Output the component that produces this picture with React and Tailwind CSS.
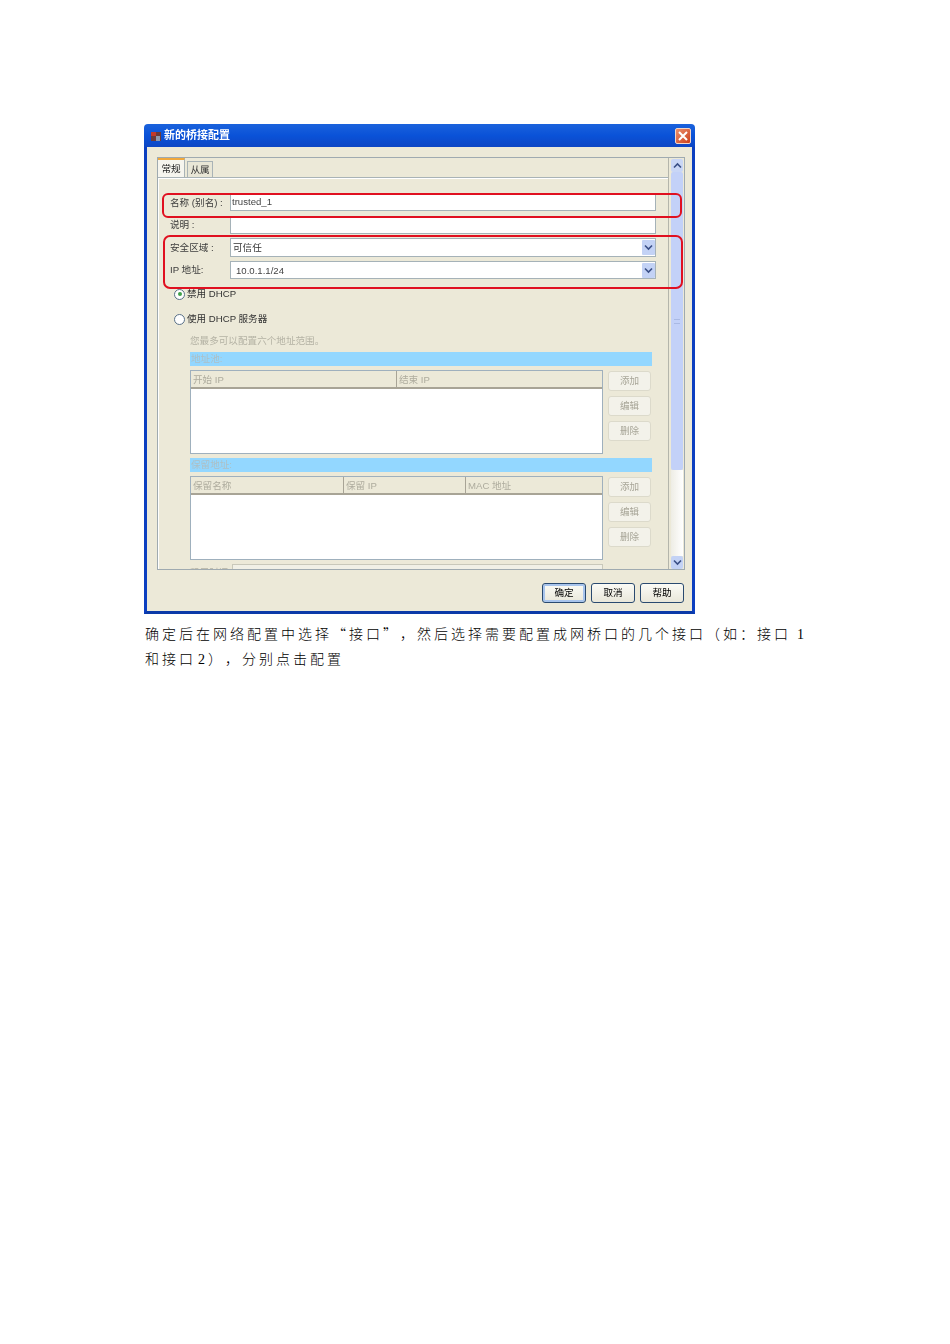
import React from 'react';

const uiFont = "font-['Liberation_Sans','Noto_Sans_CJK_SC',sans-serif]";

function Chevron({ up }) {
    return (
        <svg width="9" height="7" viewBox="0 0 9 7" fill="none" stroke="#3a4f86" strokeWidth="1.6">
            <path d={up ? 'M1 5.5 L4.5 2 L8 5.5' : 'M1 1.5 L4.5 5 L8 1.5'} />
        </svg>
    );
}

function Field({ label, value, select, className, textClass }) {
    return (
        <div className={`flex items-center shrink-0 ${className}`}>
            <span className="w-[71px] pl-[11px] whitespace-nowrap text-[#3c3c3c]">{label}</span>
            <div className="w-[426px] h-full flex items-center justify-between bg-white border border-[#a5b2b8]">
                <span className={textClass}>{value}</span>
                {select && (
                    <span className="w-[13px] h-[15px] flex items-center justify-center rounded-[1px] bg-[#c3d2f5]">
                        <Chevron />
                    </span>
                )}
            </div>
        </div>
    );
}

function Radio({ checked, label, className }) {
    return (
        <div className={`flex items-center shrink-0 pl-[15px] h-[16px] text-[#333] ${className}`}>
            <span className="w-[11px] h-[11px] rounded-full bg-white border border-[#5a7188] flex items-center justify-center">
                {checked && <span className="w-[4px] h-[4px] rounded-full bg-[#3fa04a]" />}
            </span>
            <span className="ml-[2px] whitespace-nowrap">{label}</span>
        </div>
    );
}

function SideButtons() {
    return (
        <div className="flex flex-col gap-[5px] ml-[5px] mt-[1px]">
            {['添加', '编辑', '删除'].map((t) => (
                <div
                    key={t}
                    className="w-[43px] h-[20px] flex items-center justify-center bg-[#f3f2ea] border border-[#dcdacb] rounded-[3px] text-[#a8a698]"
                >
                    {t}
                </div>
            ))}
        </div>
    );
}

function GridTable({ columns }) {
    return (
        <div className="flex flex-col w-[413px] h-[84px] border border-[#9fb0bd] bg-white">
            <div className="flex h-[18px] bg-[#ece9d8] border-b-2 border-[#a8a496] shrink-0">
                {columns.map((c, i) => (
                    <div
                        key={c.name}
                        style={{ width: c.width }}
                        className={`pl-[2px] pt-[1px] flex items-center text-[#aeac9e] ${i < columns.length - 1 ? 'border-r border-[#a8a496]' : ''}`}
                    >
                        {c.name}
                    </div>
                ))}
            </div>
        </div>
    );
}

function Section({ title, columns }) {
    return (
        <div className="pl-[31px] shrink-0 mt-[4px]">
            <div className="w-[462px] h-[14px] flex items-center bg-[#93d7ff] pl-[1px] text-[#aebfc4]">{title}</div>
            <div className="flex mt-[4px]">
                <GridTable columns={columns} />
                <SideButtons />
            </div>
        </div>
    );
}

function FooterButton({ label, primary }) {
    return (
        <div
            className={`w-[44px] h-[20px] flex items-center justify-center rounded-[3px] border border-[#2a4a70] bg-gradient-to-b from-[#fbfbf6] to-[#e9e7da] text-black ${primary ? 'shadow-[inset_0_0_0_2px_#a8c4ec]' : ''}`}
        >
            {label}
        </div>
    );
}

export default function App() {
    return (
        <div className="min-h-[1344px] bg-white pt-[124px] pl-[144px]">
            <div className={`relative w-[551px] h-[490px] flex flex-col blur-[0.5px] text-[9.6px] leading-none ${uiFont}`}>
                <div className="h-[23px] flex items-center shrink-0 rounded-t-[4px] pl-[6px] pr-[4px] bg-gradient-to-b from-[#1a62dc] via-[#0a52d8] to-[#0d46c4]">
                    <svg width="12" height="12" viewBox="0 0 12 12">
                        <rect x="1" y="2" width="10" height="9" fill="#6b3a3a" />
                        <rect x="1" y="2" width="5" height="4" fill="#c23a2a" />
                        <rect x="6" y="6" width="4" height="5" fill="#8c9ab0" />
                    </svg>
                    <span className="ml-[2px] text-[11px] font-bold text-white">新的桥接配置</span>
                    <div className="ml-auto w-[16px] h-[16px] flex items-center justify-center rounded-[2px] border border-[#f3d6c8] bg-gradient-to-br from-[#ea8f6c] to-[#cc3c14]">
                        <svg width="10" height="10" viewBox="0 0 10 10" stroke="#fff" strokeWidth="2">
                            <path d="M1 1 L9 9 M9 1 L1 9" />
                        </svg>
                    </div>
                </div>

                <div className="flex-1 flex flex-col bg-[#ece9d8] border-x-[3px] border-b-[3px] border-[#0c3fc0] border-b-[#0b3aa8] pl-[10px] pr-[8px] pt-[10px]">
                    <div className="h-[413px] w-[528px] shrink-0 flex border border-[#9faab0]">
                        <div className="w-[511px] h-full flex flex-col overflow-hidden border-r border-[#b4b5ab]">
                            <div className="h-[20px] shrink-0 flex items-end border-b border-[#a9b3b6]">
                                <div className="w-[27px] h-[19px] flex items-center justify-center bg-[#f6f5ee] border-t-2 border-[#f0a83c] border-r border-r-[#a9b3b6] text-[#222]">
                                    常规
                                </div>
                                <div className="w-[26px] h-[16px] ml-[2px] flex items-center justify-center border border-b-0 border-[#a9b3b6] bg-[#e8e6d6] text-[#333]">
                                    从属
                                </div>
                            </div>

                            <div className="flex-1 flex flex-col border-t border-l border-white overflow-hidden">
                                <Field label="名称 (别名) :" value="trusted_1" className="h-[17px] mt-[15px]" textClass="pl-[1px] pb-[1px] text-[#444]" />
                                <Field label="说明 :" value="" className="h-[18px] mt-[5px]" />
                                <Field label="安全区域 :" value="可信任" select className="h-[19px] mt-[4px]" textClass="pl-[2px] text-[#333]" />
                                <Field label="IP 地址:" value="10.0.1.1/24" select className="h-[18px] mt-[4px]" textClass="pl-[5px] pt-[1px] text-[#444]" />
                                <Radio checked label="禁用 DHCP" className="mt-[7px]" />
                                <Radio label="使用 DHCP 服务器" className="mt-[9px]" />
                                <div className="pl-[31px] mt-[7px] h-[14px] shrink-0 flex items-center text-[#b4b2a4]">您最多可以配置六个地址范围。</div>
                                <Section
                                    title="地址池:"
                                    columns={[
                                        { name: '开始 IP', width: 206 },
                                        { name: '结束 IP', width: 205 },
                                    ]}
                                />
                                <Section
                                    title="保留地址:"
                                    columns={[
                                        { name: '保留名称', width: 153 },
                                        { name: '保留 IP', width: 122 },
                                        { name: 'MAC 地址', width: 136 },
                                    ]}
                                />
                                <div className="flex items-center pl-[31px] mt-[4px] h-[18px] shrink-0 text-[#b4b2a4]">
                                    <span className="w-[42px]">租用时间</span>
                                    <div className="w-[371px] h-full pl-[6px] flex items-center border border-[#c9c8ba] bg-[#f1f0e6]">1.1.24</div>
                                </div>
                            </div>
                        </div>

                        <div className="w-[12px] ml-[2px] flex flex-col">
                            <div className="h-[13px] mt-[1px] flex items-center justify-center rounded-[2px] bg-[#c9d6f6] shrink-0">
                                <Chevron up />
                            </div>
                            <div className="h-[298px] flex items-center justify-center rounded-[2px] bg-[#c3d1f8] shrink-0">
                                <div className="w-[6px] h-[5px] border-y border-[#a9b9e4]" />
                            </div>
                            <div className="flex-1 bg-gradient-to-r from-[#eeede5] to-white" />
                            <div className="h-[13px] flex items-center justify-center rounded-[2px] bg-[#c3d2f5] shrink-0">
                                <Chevron />
                            </div>
                        </div>
                    </div>

                    <div className="flex justify-end gap-[5px] mt-[13px]">
                        <FooterButton label="确定" primary />
                        <FooterButton label="取消" />
                        <FooterButton label="帮助" />
                    </div>
                </div>

                <div className="absolute left-[18px] top-[69px] w-[520px] h-[25px] border-2 border-[#e01020] rounded-[6px]" />
                <div className="absolute left-[19px] top-[111px] w-[520px] h-[54px] border-2 border-[#e01020] rounded-[7px]" />
            </div>

            <p className="w-[668px] mt-[7px] ml-[1px] text-[14px] leading-[25px] tracking-[3px] [text-spacing-trim:space-all] text-black font-['Noto_Sans_CJK_SC','Liberation_Serif',serif] font-light">
                确定后在网络配置中选择“接口”，然后选择需要配置成网桥口的几个接口（如：接口<span className="ml-[6px] leading-none font-['Liberation_Serif',serif]">1</span>和接口<span className="ml-[2px] leading-none font-['Liberation_Serif',serif]">2</span>），分别点击配置
            </p>
        </div>
    );
}
